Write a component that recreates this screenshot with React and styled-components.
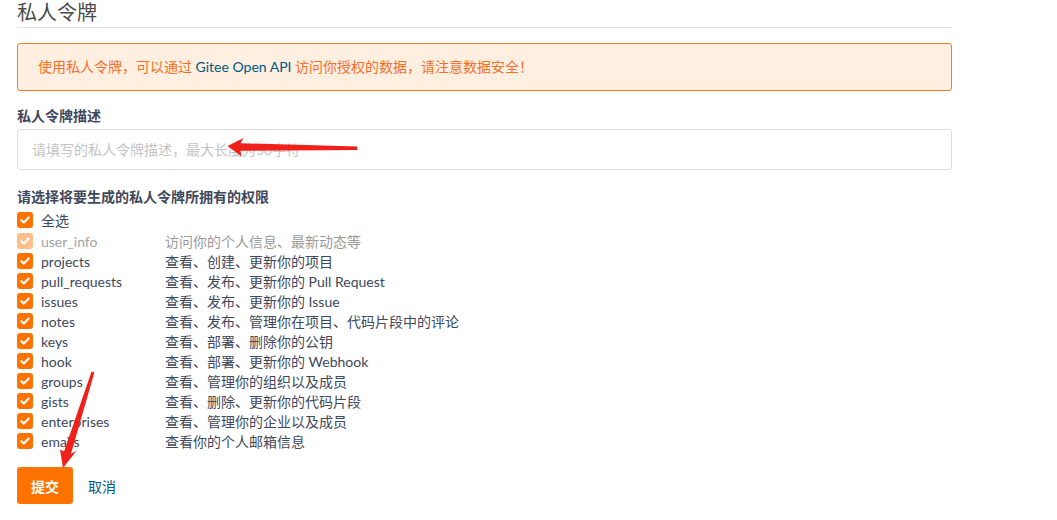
import styled, { createGlobalStyle } from "styled-components";

const GlobalStyle = createGlobalStyle`
  body {
    margin: 0;
    background: #ffffff;
    font-family: "Lato", "Noto Sans CJK SC", sans-serif;
  }
`;

const scopes = [
  { name: "user_info", desc: "访问你的个人信息、最新动态等", disabled: true },
  { name: "projects", desc: "查看、创建、更新你的项目" },
  { name: "pull_requests", desc: "查看、发布、更新你的 Pull Request" },
  { name: "issues", desc: "查看、发布、更新你的 Issue" },
  { name: "notes", desc: "查看、发布、管理你在项目、代码片段中的评论" },
  { name: "keys", desc: "查看、部署、删除你的公钥" },
  { name: "hook", desc: "查看、部署、更新你的 Webhook" },
  { name: "groups", desc: "查看、管理你的组织以及成员" },
  { name: "gists", desc: "查看、删除、更新你的代码片段" },
  { name: "enterprises", desc: "查看、管理你的企业以及成员" },
  { name: "emails", desc: "查看你的个人邮箱信息" },
];

const Check = ({ disabled }) => (
  <CheckBox disabled={disabled}>
    <svg width="12" height="12" viewBox="0 0 12 12">
      <path
        d="M2.3 6.2 L4.9 8.6 L9.7 3.6"
        fill="none"
        stroke="#fff"
        strokeWidth="2.1"
        strokeLinecap="round"
        strokeLinejoin="round"
      />
    </svg>
  </CheckBox>
);

const App = () => {
  return (
    <Page>
      <GlobalStyle />
      <Title>私人令牌</Title>
      <Alert>
        使用私人令牌，可以通过 <AlertLink>Gitee Open API</AlertLink> 访问你授权的数据，请注意数据安全！
      </Alert>
      <Label>私人令牌描述</Label>
      <Input placeholder="请填写的私人令牌描述，最大长度为50字符" />
      <Label $top={17}>请选择将要生成的私人令牌所拥有的权限</Label>
      <ScopeList>
        <Row $first>
          <Check />
          <ScopeName>全选</ScopeName>
        </Row>
        {scopes.map((s) => (
          <Row key={s.name}>
            <Check disabled={s.disabled} />
            <ScopeName $muted={s.disabled}>{s.name}</ScopeName>
            <ScopeDesc $muted={s.disabled}>{s.desc}</ScopeDesc>
          </Row>
        ))}
      </ScopeList>
      <Actions>
        <SubmitButton>提交</SubmitButton>
        <CancelLink>取消</CancelLink>
      </Actions>

      {/* red annotation arrows from the screenshot */}
      <Annotation width="1057" height="520" viewBox="0 0 1057 520">
        <polygon
          points="227.5,146 243.5,138 240.5,143.2 357,146.5 357.5,150 240.5,150.8 241.5,156.5"
          fill="#f0201a"
        />
        <polygon
          points="63,468 60,449.5 64,451.5 91.6,371.4 94.4,372.4 71,453.8 76.5,450.8"
          fill="#f0201a"
        />
      </Annotation>
    </Page>
  );
};

export default App;

const Page = styled.div`
  position: relative;
  width: 935px;
  padding: 0 0 20px 17px;
`;

const Title = styled.h2`
  margin: 0;
  font-size: 20px;
  font-weight: 400;
  line-height: 24px;
  padding-bottom: 3px;
  color: #4a4a4a;
  border-bottom: 1px solid #e3e3e3;
`;

const Alert = styled.div`
  margin-top: 15px;
  height: 46px;
  line-height: 46px;
  padding: 0 20px;
  border: 1px solid #f8782a;
  border-radius: 3px;
  background: #feefe0;
  color: #f3702a;
  font-size: 14px;
`;

const AlertLink = styled.span`
  color: #005980;
`;

const Label = styled.div`
  margin-top: ${(p) => (p.$top !== undefined ? p.$top : 15)}px;
  font-size: 14px;
  line-height: 20px;
  font-weight: 700;
  color: #40485b;
`;

const Input = styled.input`
  display: block;
  box-sizing: border-box;
  margin-top: 3px;
  width: 100%;
  height: 41px;
  padding: 0 14px;
  border: 1px solid #dedede;
  border-radius: 3px;
  font-family: inherit;
  font-size: 14px;
  color: #333;
  outline: none;

  &::placeholder {
    color: #c4c4c4;
  }
`;

const ScopeList = styled.div`
  margin-top: 3px;
  display: flex;
  flex-direction: column;
`;

const Row = styled.div`
  display: flex;
  align-items: center;
  height: 20px;
  margin-bottom: ${(p) => (p.$first ? 1 : 0)}px;
  font-size: 14px;
`;

const CheckBox = styled.span`
  display: inline-flex;
  align-items: center;
  justify-content: center;
  width: 16px;
  height: 16px;
  border-radius: 3px;
  background: ${(p) => (p.disabled ? "#ffbf8c" : "#fe7300")};
  margin-right: 8px;
  flex-shrink: 0;
`;

const ScopeName = styled.span`
  width: 124px;
  color: ${(p) => (p.$muted ? "#a5a5a5" : "#40485b")};
`;

const ScopeDesc = styled.span`
  color: ${(p) => (p.$muted ? "#9a9a9a" : "#40485b")};
`;

const Actions = styled.div`
  margin-top: 16px;
  display: flex;
  align-items: center;
  gap: 15px;
`;

const SubmitButton = styled.button`
  width: 56px;
  height: 37px;
  border: none;
  border-radius: 3px;
  background: #fe7300;
  color: #fff;
  font-family: inherit;
  font-size: 14px;
  font-weight: 700;
  cursor: pointer;
`;

const CancelLink = styled.a`
  color: #005980;
  font-size: 14px;
  cursor: pointer;
`;

const Annotation = styled.svg`
  position: absolute;
  left: 0;
  top: 0;
  pointer-events: none;
`;
